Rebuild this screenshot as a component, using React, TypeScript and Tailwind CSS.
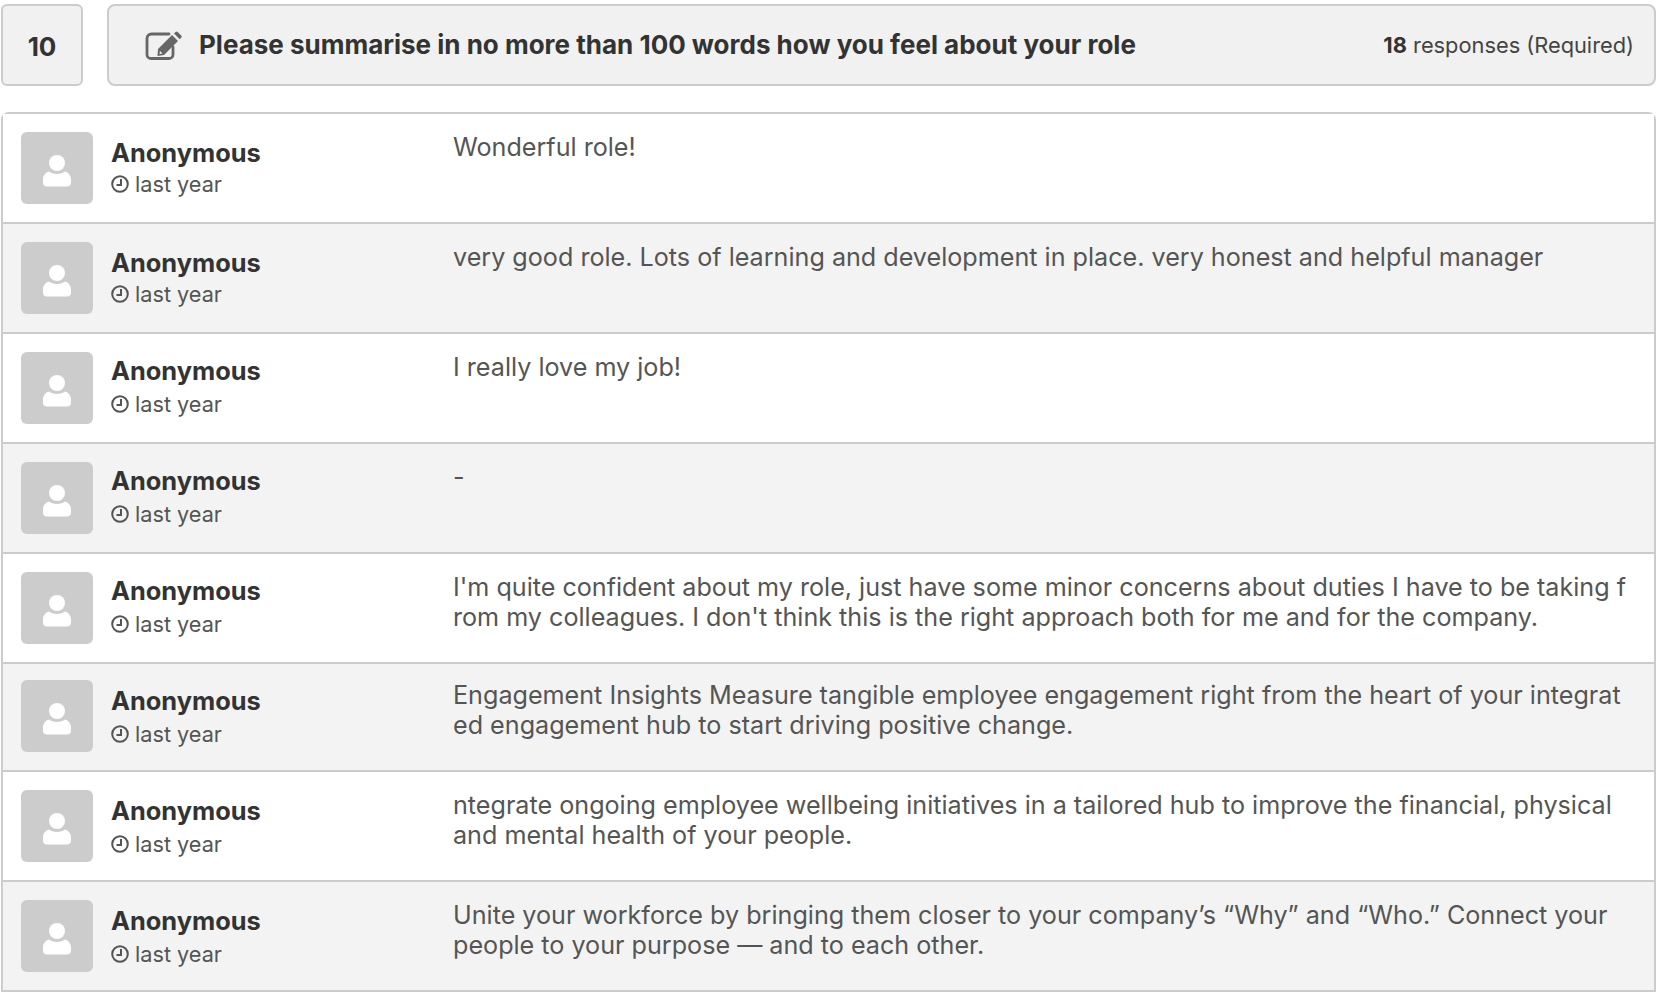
import React from 'react';

const rows = [
  { text: "Wonderful role!", top: 'pt-[18px]', name: 'pt-[6px]', meta: 'mt-[1px]' },
  { text: "very good role. Lots of learning and development in place. very honest and helpful manager", top: 'pt-[18px]', name: 'pt-[6px]', meta: 'mt-[1px]' },
  { text: "I really love my job!", top: 'pt-[18px]', name: 'pt-[4px]', meta: 'mt-[3px]' },
  { text: "-", top: 'pt-[18px]', name: 'pt-[4px]', meta: 'mt-[3px]' },
  { text: "I'm quite confident about my role, just have some minor concerns about duties I have to be taking from my colleagues. I don't think this is the right approach both for me and for the company.", top: 'pt-[18px]', name: 'pt-[4px]', meta: 'mt-[3px]' },
  { text: "Engagement Insights Measure tangible employee engagement right from the heart of your integrated engagement hub to start driving positive change.", top: 'pt-[16px]', name: 'pt-[6px]', meta: 'mt-[3px]' },
  { text: "ntegrate ongoing employee wellbeing initiatives in a tailored hub to improve the financial, physical and mental health of your people.", top: 'pt-[18px]', name: 'pt-[6px]', meta: 'mt-[3px]' },
  { text: "Unite your workforce by bringing them closer to your company’s “Why” and “Who.” Connect your people to your purpose — and to each other.", top: 'pt-[18px]', name: 'pt-[6px]', meta: 'mt-[3px]' },
];

const PencilSquare = () => (
  <svg viewBox="0 0 37 29" className="w-[37px] h-[29px] shrink-0" fill="none">
    <path d="M24 3H6.500a4.500 4.500 0 0 0-4.500 4.500v16a4 4 0 0 0 4 4h18a4 4 0 0 0 4-4V16" stroke="#666" strokeWidth="2.800" strokeLinecap="round" />
    <path d="M13 18L27 4l6 6-14 14-6.500 1z" fill="#666" />
    <path d="M29 2.500L30.500 1a1.600 1.600 0 0 1 2.200 0l3.500 3.500a1.600 1.600 0 0 1 0 2.200L34.700 8.200z" fill="#666" />
    <path d="M15 20l-.5 3 3-.5z" fill="#f1f1f1" />
  </svg>
);

const Clock = () => (
  <svg viewBox="0 0 18 18" className="w-[18px] h-[18px] shrink-0" fill="none">
    <circle cx="9" cy="9" r="7.800" stroke="#555" strokeWidth="2" />
    <path d="M10 4v6H5.500" stroke="#555" strokeWidth="2" />
  </svg>
);

const Avatar = () => (
  <div className="w-[72px] h-[72px] shrink-0 rounded-[6px] bg-[#cccccc] flex items-center justify-center">
    <svg viewBox="0 0 30 34" className="w-[30px] h-[34px] mt-[6px]" fill="#fff">
      <circle cx="15" cy="9" r="8" />
      <path d="M7 17.500c2 1.600 4.800 2.500 8 2.500s6-.9 8-2.500c3.600 1 6 4 6 8v3a4 4 0 0 1-4 4H5a4 4 0 0 1-4-4v-3c0-4 2.400-7 6-8z" />
    </svg>
  </div>
);

const App: React.FC = () => {
  return (
    <div className="w-[1659px] h-[992px] overflow-hidden bg-white font-['Inter',sans-serif] pt-[4px] pl-[1px]">
      <div className="flex gap-[24px]">
        <div className="w-[82px] h-[82px] flex items-center justify-center rounded-[6px] border-2 border-[#cccccc] bg-[#f1f1f1] pt-[2px] text-[26px] font-bold text-[#333]">
          10
        </div>
        <div className="w-[1549px] h-[82px] flex items-center rounded-[8px] border-2 border-[#cccccc] bg-[#f1f1f1] pl-[36px] pr-[20px]">
          <PencilSquare />
          <div className="ml-[17px] text-[26px] font-bold text-[#333] leading-[30px]">
            Please summarise in no more than 100 words how you feel about your role
          </div>
          <div className="ml-auto text-[21.800px] text-[#444] pt-[1px]">
            <span className="font-bold text-[#333]">18</span> responses (Required)
          </div>
        </div>
      </div>

      <div className="mt-[26px] w-[1655px] rounded-t-[8px] border-x-2 border-t-2 border-[#cccccc]">
        {rows.map((row, i) => (
          <div
            key={i}
            className={`flex border-b-2 border-[#cccccc] pl-[18px] ${row.top} ${i === 5 ? 'h-[108px]' : 'h-[110px]'} ${i % 2 === 1 ? 'bg-[#f3f3f3]' : 'bg-white'}`}
          >
            <div className="w-[432px] shrink-0 flex">
              <Avatar />
              <div className={`ml-[18px] ${row.name}`}>
                <div className="text-[25.400px] font-bold text-[#333] leading-[30px]">Anonymous</div>
                <div className={`flex items-center gap-[6px] text-[21.700px] leading-[30px] text-[#555] ${row.meta}`}>
                  <Clock />
                  last year
                </div>
              </div>
            </div>
            <div className="w-[1175px] text-[25.150px] leading-[30px] text-[#555] break-all">
              {row.text}
            </div>
          </div>
        ))}
      </div>
    </div>
  );
};

export default App;
